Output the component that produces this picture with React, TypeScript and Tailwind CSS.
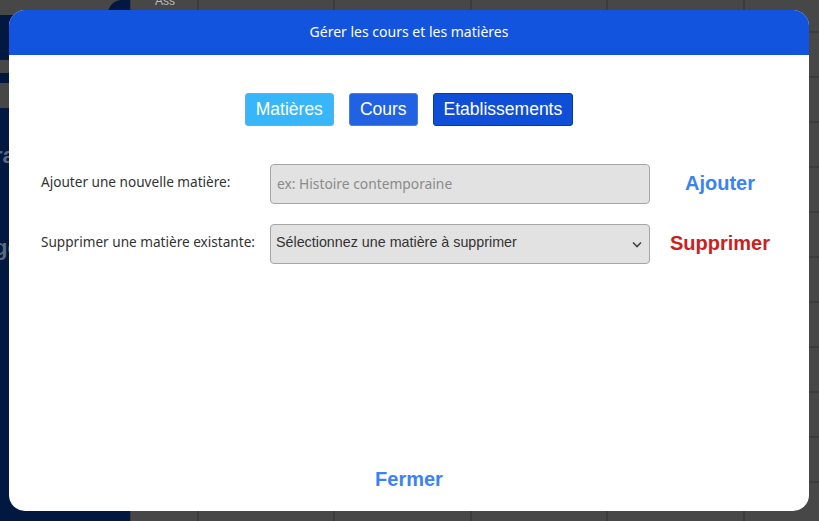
import React from "react";

function Background() {
  const cols = [197, 333, 470, 606, 743];
  const rows = [31, 76, 121, 166, 211, 256, 301, 346, 391, 436, 481];
  return (
    <div className="absolute inset-0 bg-[#474747] overflow-hidden">
      <div className="absolute left-0 top-[15px] w-[130px] bottom-0 bg-[#021840]" />
      <div className="absolute left-[108px] top-0 w-[22px] h-[16px] bg-[#021840] rounded-tl-[14px]" />
      <div className="absolute left-0 top-0 w-[108px] h-[15px] bg-[#474747]" />
      <div className="absolute left-0 top-[60px] w-[130px] h-[13px] bg-[#474747]" />
      <div className="absolute left-0 top-[83px] w-[130px] h-[25px] bg-[#474747]" />
      <div className="absolute left-[-6px] top-[145px] text-[22px] font-bold text-[#5c6a80] leading-none" style={{ fontFamily: "'Liberation Sans', sans-serif" }}>ra</div>
      <div className="absolute left-[-6px] top-[237px] text-[22px] font-bold text-[#5c6a80] leading-none" style={{ fontFamily: "'Liberation Sans', sans-serif" }}>ge</div>
      <div className="absolute left-[130px] top-0 w-px h-full bg-[#3a3a3a]" />
      {cols.map((x) => (
        <div key={x} className="absolute top-0 w-[2px] h-full bg-[#3c3c3c]" style={{ left: x }} />
      ))}
      {rows.map((y) => (
        <div key={y} className="absolute left-[130px] right-0 h-[2px] bg-[#3c3c3c]" style={{ top: y }} />
      ))}
      <div className="absolute left-[155px] top-[-8px] text-[12px] text-[#bbbbbb]" style={{ fontFamily: "'Liberation Sans', sans-serif" }}>Ass</div>
    </div>
  );
}

export default function App() {
  return (
    <div className="relative w-[819px] h-[521px] overflow-hidden">
      <Background />
      <div className="absolute left-[9px] top-[10px] w-[800px] h-[501px] bg-white rounded-[16px] overflow-hidden flex flex-col">
        <div
          className="h-[45px] bg-[#1254dd] flex items-center justify-center text-white text-[14px] pb-[3px]"
          style={{ fontFamily: "'Noto Sans', sans-serif" }}
        >
          Gérer les cours et les matières
        </div>
        <div className="flex-1 flex flex-col" style={{ fontFamily: "'Liberation Sans', Arial, sans-serif" }}>
          <div className="flex justify-center gap-[15px] mt-[38px]">
            <button className="h-[33px] px-[10px] rounded-[3px] bg-[#38b6fc] border border-[#5fb0ea] text-white text-[17.5px]">Matières</button>
            <button className="h-[33px] px-[10px] rounded-[3px] bg-[#2062e2] border border-[#4a7fe0] text-white text-[17.5px]">Cours</button>
            <button className="h-[33px] px-[10px] rounded-[3px] bg-[#0f4fd8] border border-[#0a3a9a] text-white text-[17.5px]">Etablissements</button>
          </div>
          <div className="mt-[38px] pl-[32px] flex flex-col gap-[20px]">
            <div className="flex items-center">
              <div className="w-[229px] text-[13.6px] text-[#333] -mt-[3px]" style={{ fontFamily: "'Noto Sans', sans-serif" }}>
                Ajouter une nouvelle matière:
              </div>
              <input
                className="w-[380px] h-[40px] bg-[#e2e2e2] border border-[#a6a6a6] rounded-[4px] px-[6px] pb-[2px] text-[13.8px] placeholder:text-[#8a8a8a] outline-none"
                style={{ fontFamily: "'Noto Sans', sans-serif" }}
                placeholder="ex: Histoire contemporaine"
              />
              <div className="w-[140px] text-center text-[20px] font-bold text-[#3b82f6] -mt-[2px]">Ajouter</div>
            </div>
            <div className="flex items-center">
              <div className="w-[229px] text-[13.6px] text-[#333] -mt-[3px]" style={{ fontFamily: "'Noto Sans', sans-serif" }}>
                Supprimer une matière existante:
              </div>
              <div className="relative w-[380px] h-[40px] bg-[#e2e2e2] border border-[#a6a6a6] rounded-[4px] flex items-center pl-[5px] pb-[2px] text-[14.3px] text-[#333]">
                Sélectionnez une matière à supprimer
                <svg className="absolute right-[7px] top-[16px]" width="10" height="7" viewBox="0 0 10 7">
                  <path d="M1 1.5 L5 5.5 L9 1.5" fill="none" stroke="#444" strokeWidth="1.6" />
                </svg>
              </div>
              <div className="w-[140px] text-center text-[20px] font-bold text-[#cc2020] -mt-[2px]">Supprimer</div>
            </div>
          </div>
          <div className="flex-1" />
          <div className="flex justify-center mb-[17px] text-[20px] font-bold text-[#3b82f6]">Fermer</div>
        </div>
      </div>
    </div>
  );
}
